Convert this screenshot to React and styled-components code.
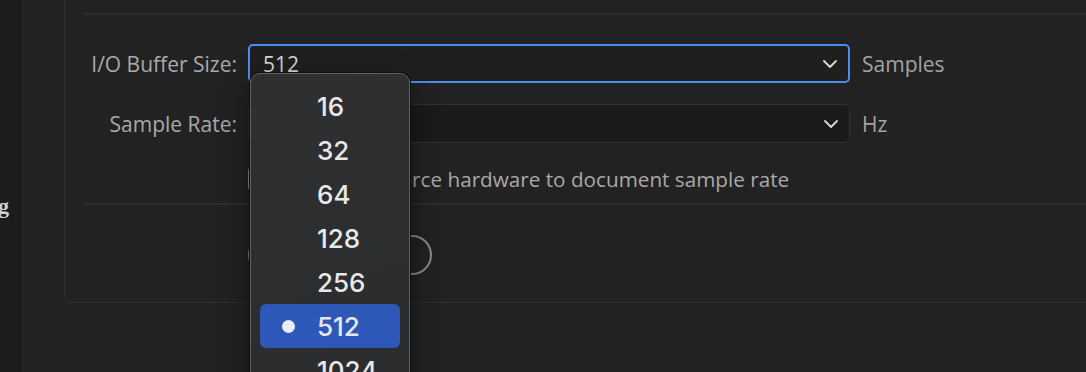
import React from 'react';
import styled, { createGlobalStyle } from 'styled-components';

const Global = createGlobalStyle`
  html, body {
    margin: 0;
    padding: 0;
    background: #222222;
    width: 1086px;
    height: 372px;
    overflow: hidden;
  }
  #root { height: 372px; }
  * { box-sizing: border-box; }
`;

const Page = styled.div`
  display: flex;
  width: 1086px;
  height: 372px;
  overflow: hidden;
  background: #222222;
  font-family: "Open Sans", "Noto Sans", sans-serif;
`;

const Sidebar = styled.aside`
  flex: none;
  width: 23px;
  background: #1c1c1c;
  border-right: 1px solid #2b2b2b;
  display: flex;
  flex-direction: column;
  padding-top: 193px;
  overflow: hidden;
`;

const SidebarItem = styled.div`
  display: flex;
  justify-content: flex-end;
  padding-right: 13px;
  white-space: nowrap;
  font-family: "Liberation Serif", serif;
  font-weight: bold;
  font-size: 22px;
  line-height: 26px;
  color: #d2d2d2;
`;

const Content = styled.main`
  flex: 1;
  padding-left: 41px;
  overflow: hidden;
`;

const Panel = styled.section`
  width: calc(100% + 40px);
  height: 303px;
  border-left: 1px solid #2f2f2f;
  border-bottom: 1px solid #2f2f2f;
  border-bottom-left-radius: 6px;
  padding-left: 19px;
  padding-top: 13px;
  display: flex;
  flex-direction: column;
`;

const Divider = styled.div`
  height: 2px;
  background: #2d2d2d;
  margin-top: ${p => p.$top || 0}px;
`;

const FormGrid = styled.div`
  display: grid;
  grid-template-columns: 153px 602px auto;
  grid-template-rows: 39px 39px 30px;
  column-gap: 11px;
  row-gap: 21px;
  margin-top: 29px;
  align-items: center;
`;

const Label = styled.label`
  justify-self: end;
  font-size: 21px;
  color: #a9a9a9;
  white-space: nowrap;
`;

const SelectWrap = styled.div`
  position: relative;
  height: 39px;
`;

const SelectBox = styled.div`
  height: 100%;
  display: flex;
  align-items: center;
  justify-content: space-between;
  padding: 0 11px 0 ${p => (p.$focused ? 13 : 14)}px;
  border: ${p => (p.$focused ? '2px solid #4b8ef2' : '1px solid #303030')};
  border-radius: 5px;
  background: ${p => (p.$focused ? '#1f1f1f' : '#1b1b1b')};
  color: #d4d4d4;
  font-size: 21px;
`;

const Unit = styled.span`
  padding-left: 1px;
  font-size: 21px;
  color: #a3a3a3;
`;

const CheckRow = styled.div`
  grid-column: 2 / 4;
  display: flex;
  align-items: center;
  gap: 117px;
  font-size: 20.7px;
  color: #a9a9a9;
`;

const Checkbox = styled.span`
  width: 24px;
  height: 24px;
  border: 2px solid #8c8c8c;
  border-radius: 4px;
  flex: none;
`;

const ButtonRow = styled.div`
  margin-top: 30px;
  padding-left: 164px;
`;

const PillButton = styled.button`
  width: 184px;
  height: 40px;
  border: 2px solid #8a8a8a;
  border-radius: 20px;
  background: transparent;
  color: #cfcfcf;
  font-family: "Open Sans", sans-serif;
  font-size: 20px;
`;

const Menu = styled.ul`
  position: absolute;
  top: 29px;
  left: 2px;
  width: 160px;
  margin: 0;
  padding: 10px 9px;
  list-style: none;
  background: linear-gradient(160deg, #2d2f30, #2a2c2d);
  border: 1px solid #616161;
  border-radius: 10px;
  box-shadow: 0 0 0 1px #0f0f0f, 0 12px 30px rgba(0, 0, 0, 0.55);
  z-index: 10;
`;

const MenuItem = styled.li`
  height: 44px;
  display: flex;
  align-items: center;
  gap: 22px;
  padding-left: 22px;
  border-radius: 6px;
  background: ${p => (p.$selected ? '#2d58b8' : 'transparent')};
  font-family: "Inter", sans-serif;
  font-weight: 500;
  font-size: 26px;
  color: #e8e8e8;
`;

const Bullet = styled.span`
  width: 13px;
  height: 13px;
  border-radius: 50%;
  background: #e9edf9;
  visibility: ${p => (p.$show ? 'visible' : 'hidden')};
  flex: none;
`;

const Chevron = () => (
  <svg width="14" height="8" viewBox="0 0 14 8" fill="none">
    <path d="M1 1l6 6 6-6" stroke="#d8d8d8" strokeWidth="1.8" strokeLinecap="round" strokeLinejoin="round" />
  </svg>
);

const sizes = ['16', '32', '64', '128', '256', '512', '1024', '2048'];

export default function App() {
  return (
    <>
      <Global />
      <Page>
        <Sidebar>
          <SidebarItem>Mixing</SidebarItem>
        </Sidebar>
        <Content>
          <Panel>
            <Divider />
            <FormGrid>
              <Label>I/O Buffer Size:</Label>
              <SelectWrap>
                <SelectBox $focused>
                  <span>512</span>
                  <Chevron />
                </SelectBox>
                <Menu>
                  {sizes.map(s => (
                    <MenuItem key={s} $selected={s === '512'}>
                      <Bullet $show={s === '512'} />
                      {s}
                    </MenuItem>
                  ))}
                </Menu>
              </SelectWrap>
              <Unit>Samples</Unit>

              <Label>Sample Rate:</Label>
              <SelectWrap>
                <SelectBox>
                  <span>48000</span>
                  <Chevron />
                </SelectBox>
              </SelectWrap>
              <Unit>Hz</Unit>

              <CheckRow>
                <Checkbox />
                <span>Force hardware to document sample rate</span>
              </CheckRow>
            </FormGrid>
            <Divider $top={9} />
            <ButtonRow>
              <PillButton>Settings...</PillButton>
            </ButtonRow>
          </Panel>
        </Content>
      </Page>
    </>
  );
}
